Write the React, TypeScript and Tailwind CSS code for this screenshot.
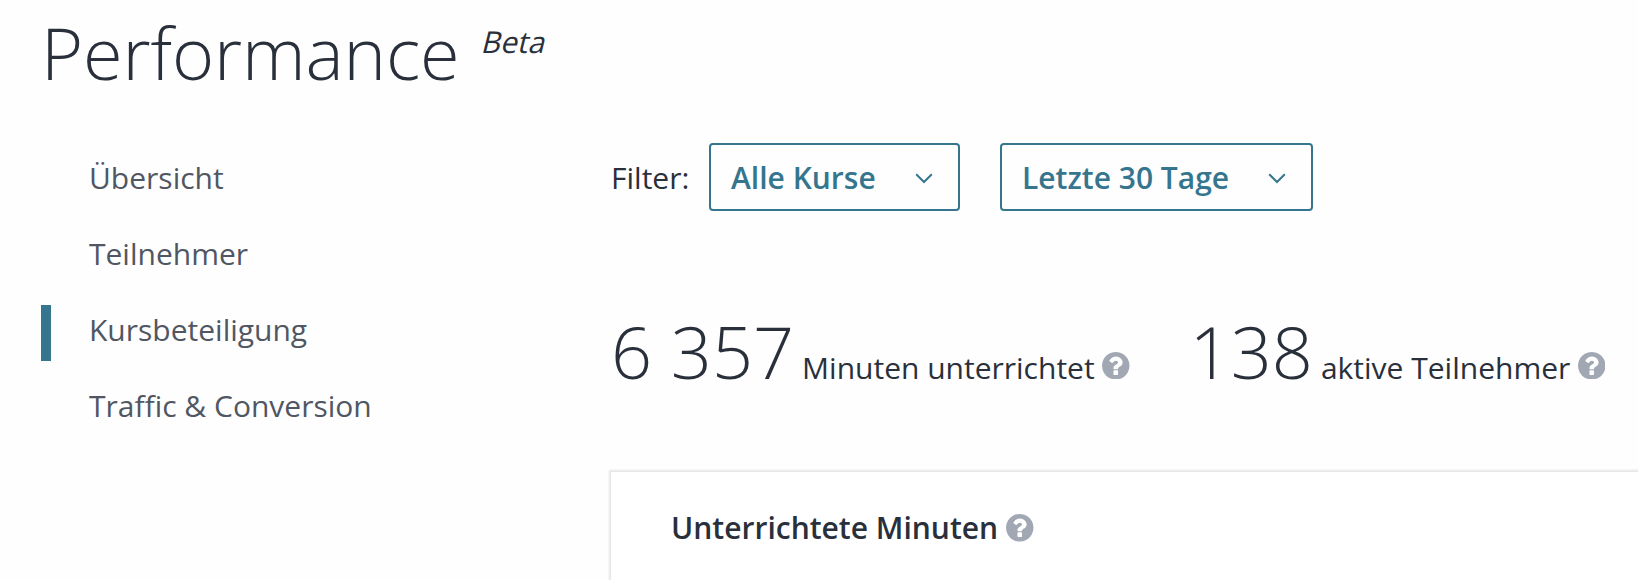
import clsx from "clsx"

const NAV_ITEMS = [
  { label: "Übersicht", active: false },
  { label: "Teilnehmer", active: false },
  { label: "Kursbeteiligung", active: true },
  { label: "Traffic & Conversion", active: false },
]

function HelpIcon({ className }: { className?: string }) {
  return (
    <svg viewBox="128 128 1536 1536" className={clsx("size-[27.5px] shrink-0 fill-[#a1a7b3]", className)}>
      <path d="M1024 1376v-192q0-14-9-23t-23-9h-192q-14 0-23 9t-9 23v192q0 14 9 23t23 9h192q14 0 23-9t9-23zm256-672q0-88-55.5-163t-138.5-116-170-41q-243 0-371 213-15 24 8 42l132 100q7 6 19 6 16 0 25-12 53-68 86-92 34-24 86-24 48 0 85.5 26t37.5 59q0 38-20 61t-68 45q-63 28-115.5 86.5t-52.5 125.5v36q0 14 9 23t23 9h192q14 0 23-9t9-23q0-19 21.5-49.5t54.5-49.5q32-18 49-28.5t46-35 44.5-48 28-60.5 12.5-81zm384 192q0 209-103 385.5t-279.5 279.5-385.5 103-385.5-103-279.5-279.5-103-385.5 103-385.5 279.5-279.5 385.5-103 385.5 103 279.5 279.5 103 385.5z" />
    </svg>
  )
}

function FilterButton({ label, className }: { label: string; className?: string }) {
  return (
    <button
      className={clsx(
        "flex h-17 items-center justify-between rounded border-2 border-[#35768e] pr-[25px] pl-5 font-semibold text-[#35768e]",
        className
      )}
    >
      <span className="pt-px">{label}</span>
      <svg viewBox="0 0 18 11" className="mt-0.5 h-[11px] w-[18px]" fill="none" stroke="currentColor" strokeWidth="2">
        <path d="M1.2 1.2 9 9 16.8 1.2" />
      </svg>
    </button>
  )
}

function Stat({ value, label }: { value: string; label: string }) {
  return (
    <div className="flex items-baseline whitespace-nowrap">
      <span className="text-[72px] leading-[98px] font-light">{value}</span>
      <span className="ml-2">{label}</span>
      <HelpIcon className="ml-[7.5px]" />
    </div>
  )
}

export default function App() {
  return (
    <div className="h-[580px] w-full overflow-hidden bg-[#fefefe] font-['Open_Sans',sans-serif] text-[30px] leading-10 text-[#29303b]">
      <header className="flex h-[143px] items-start pl-[41px]">
        <h1 className="mt-[3px] text-[72px] leading-[98px] font-light tracking-[-0.1px]">Performance</h1>
        {/* slanted upright face, not the true italic */}
        <svg className="mt-[22px] ml-[21px] h-10 w-20 overflow-visible fill-current">
          <text x="0" y="31" transform="skewX(-14) translate(8 0)">
            Beta
          </text>
        </svg>
      </header>

      <div className="flex">
        <nav className="flex w-[611px] shrink-0 flex-col gap-5 pt-[10px] pl-[41px]">
          {NAV_ITEMS.map((item) => (
            <a
              key={item.label}
              className={clsx(
                "flex h-14 items-center border-l-10 pb-[7px] pl-[38px] text-[#505763]",
                item.active ? "border-[#35768e]" : "border-transparent"
              )}
            >
              {item.label}
            </a>
          ))}
        </nav>

        <main className="flex-1">
          <div className="flex items-center">
            <span className="w-[98px] pt-px">Filter:</span>
            <FilterButton label="Alle Kurse" className="w-[251px]" />
            <FilterButton label="Letzte 30 Tage" className="ml-10 w-[313px]" />
          </div>

          <div className="mt-[91px] flex gap-[60px]">
            <Stat value="6 357" label="Minuten unterrichtet" />
            <Stat value="138" label="aktive Teilnehmer" />
          </div>

          <section className="mt-[72px] -mr-4 h-40 bg-white pt-9 pl-[60px] shadow-[0_0_2px_2px_rgba(20,23,28,0.1)]">
            <h2 className="flex items-center font-semibold">
              Unterrichtete Minuten
              <HelpIcon className="ml-2" />
            </h2>
          </section>
        </main>
      </div>
    </div>
  )
}
